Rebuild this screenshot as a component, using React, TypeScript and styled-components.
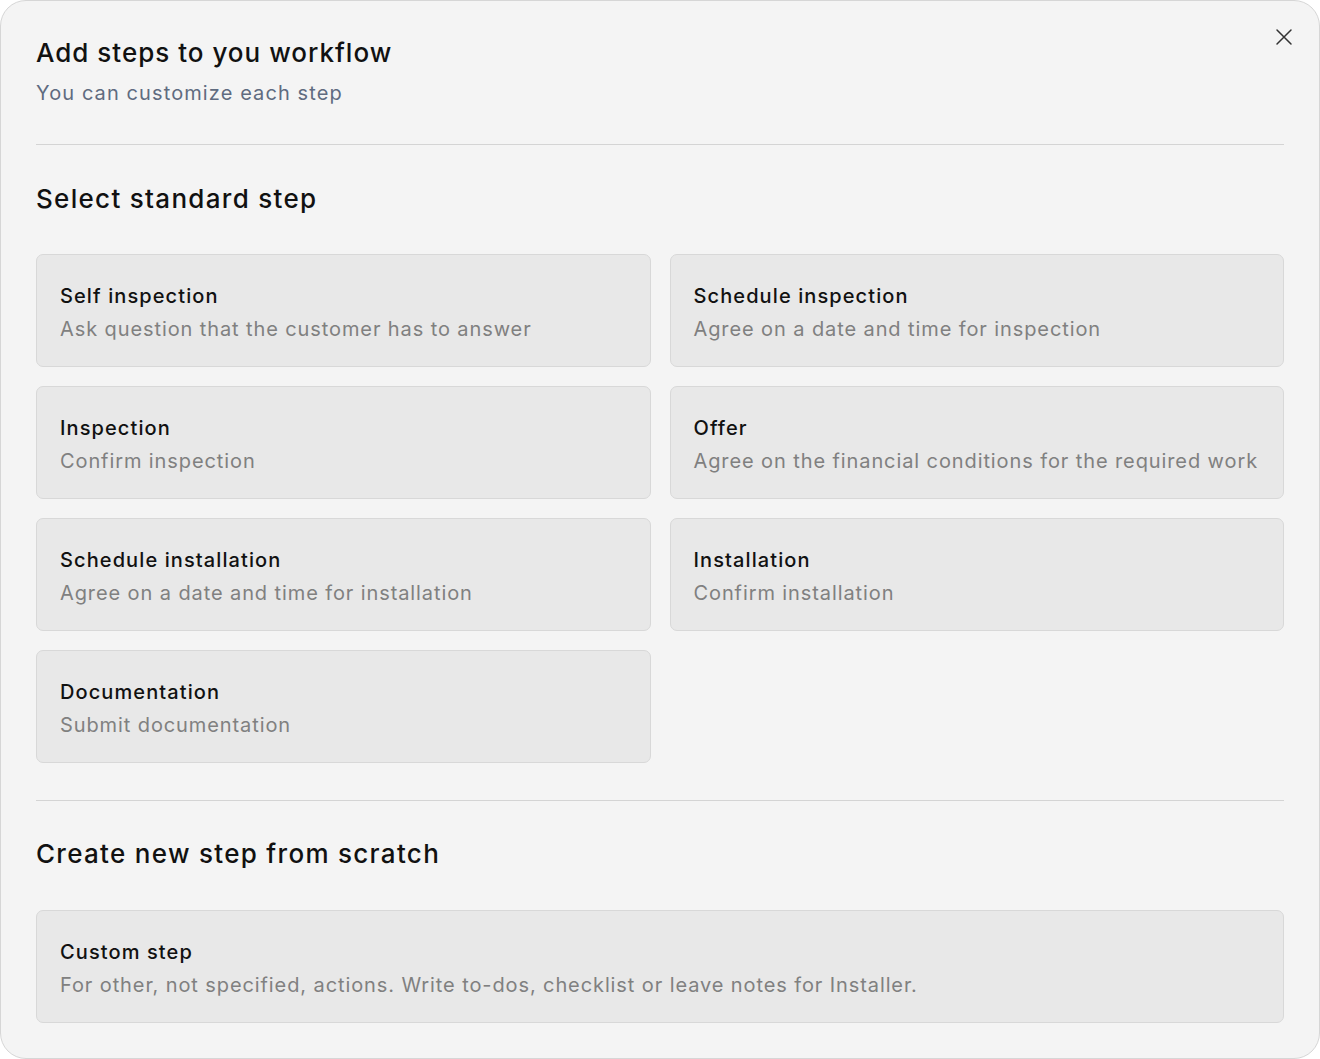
import React from "react";
import styled, { createGlobalStyle } from "styled-components";

const Global = createGlobalStyle`
  html, body { margin: 0; padding: 0; background: #ffffff; }
  body { font-family: Inter, "Open Sans", sans-serif; -webkit-font-smoothing: antialiased; }
  * { box-sizing: border-box; }
`;

const Dialog = styled.div`
  position: relative;
  width: 1320px;
  height: 1059px;
  background: #f4f4f4;
  border: 1px solid #d6d6d6;
  border-radius: 26px;
  padding: 35px 35px 0 35px;
  display: flex;
  flex-direction: column;
`;

const Title = styled.h1`
  margin: 0;
  font-size: 26px;
  line-height: 34px;
  font-weight: 500;
  letter-spacing: 1px;
  color: #111111;
`;

const Subtitle = styled.p`
  margin: 9px 0 0;
  font-size: 20px;
  line-height: 28px;
  letter-spacing: 1.1px;
  color: #5f6b80;
`;

const Divider = styled.hr<{ $top: number }>`
  margin: ${(p) => p.$top}px 0 0;
  border: 0;
  border-top: 1.5px solid #d4d4d4;
  height: 0;
`;

const SectionTitle = styled.h2<{ $top: number }>`
  margin: ${(p) => p.$top}px 0 0;
  font-size: 26px;
  line-height: 34px;
  font-weight: 500;
  letter-spacing: 1.3px;
  color: #111111;
`;

const Grid = styled.div<{ $top: number; $cols: number }>`
  margin-top: ${(p) => p.$top}px;
  display: grid;
  grid-template-columns: repeat(${(p) => p.$cols}, 1fr);
  column-gap: 19px;
  row-gap: 19px;
`;

const StepCard = styled.button`
  all: unset;
  box-sizing: border-box;
  display: flex;
  flex-direction: column;
  height: 113px;
  padding: 27px 20px 0 23px;
  background: #e8e8e8;
  border: 1px solid #d8d8d8;
  border-radius: 7px;
  cursor: pointer;
  font-family: Inter, "Open Sans", sans-serif;
`;

const StepTitle = styled.span`
  font-size: 20px;
  line-height: 28px;
  font-weight: 500;
  letter-spacing: 1.1px;
  white-space: nowrap;
  color: #111111;
`;

const StepDesc = styled.span`
  margin-top: 5px;
  font-size: 20px;
  line-height: 28px;
  letter-spacing: 0.9px;
  white-space: nowrap;
  color: #808080;
`;

const Close = styled.button`
  all: unset;
  position: absolute;
  top: 26px;
  right: 25px;
  width: 20px;
  height: 20px;
  display: flex;
  align-items: center;
  justify-content: center;
  cursor: pointer;
`;

const steps = [
  { t: "Self inspection", d: "Ask question that the customer has to answer" },
  { t: "Schedule inspection", d: "Agree on a date and time for inspection" },
  { t: "Inspection", d: "Confirm inspection" },
  { t: "Offer", d: "Agree on the financial conditions for the required work" },
  { t: "Schedule installation", d: "Agree on a date and time for installation" },
  { t: "Installation", d: "Confirm installation" },
  { t: "Documentation", d: "Submit documentation" },
];

export default function App() {
  return (
    <>
      <Global />
      <Dialog>
        <Close aria-label="Close">
          <svg width="18" height="18" viewBox="0 0 18 18" fill="none">
            <path d="M2 2L16 16M16 2L2 16" stroke="#333" strokeWidth="1.5" strokeLinecap="round" />
          </svg>
        </Close>
        <Title>Add steps to you workflow</Title>
        <Subtitle>You can customize each step</Subtitle>
        <Divider $top={37} />
        <SectionTitle $top={37}>Select standard step</SectionTitle>
        <Grid $top={38} $cols={2}>
          {steps.map((s) => (
            <StepCard key={s.t}>
              <StepTitle>{s.t}</StepTitle>
              <StepDesc>{s.d}</StepDesc>
            </StepCard>
          ))}
        </Grid>
        <Divider $top={37} />
        <SectionTitle $top={36}>Create new step from scratch</SectionTitle>
        <Grid $top={39} $cols={1}>
          <StepCard>
            <StepTitle>Custom step</StepTitle>
            <StepDesc>For other, not specified, actions. Write to-dos, checklist or leave notes for Installer.</StepDesc>
          </StepCard>
        </Grid>
      </Dialog>
    </>
  );
}
